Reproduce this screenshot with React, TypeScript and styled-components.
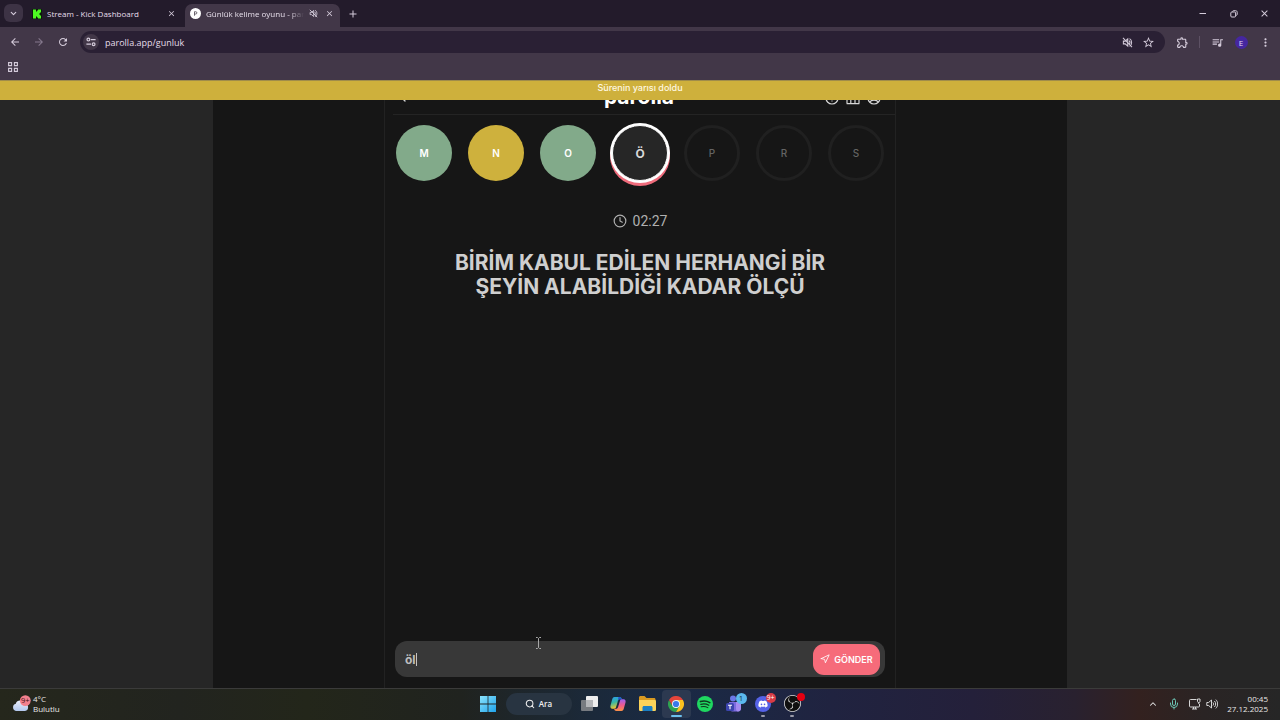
import React from "react";
import styled, { createGlobalStyle } from "styled-components";
import { ChevronDown, ChevronLeft, ChevronUp, Clock, Mic, Navigation, Search } from "lucide-react";
import {
  MdArrowBack,
  MdArrowForward,
  MdClose,
  MdAdd,
  MdMoreVert,
  MdOutlineExtension,
  MdQueueMusic,
  MdRefresh,
  MdStarBorder,
} from "react-icons/md";
import { FaDiscord } from "react-icons/fa";
import { SiObsstudio } from "react-icons/si";

const Global = createGlobalStyle`
  *, *::before, *::after { box-sizing: border-box; }
  body { margin: 0; background: #161616; }
  button, input { font: inherit; color: inherit; border: 0; background: none; padding: 0; margin: 0; }
  svg { display: block; flex: none; }
`;

const uiFont = `"Open Sans", "Noto Sans", sans-serif`;
const gameFont = `Inter, Roboto, sans-serif`;

const Screen = styled.div`
  min-height: 100vh;
  display: flex;
  flex-direction: column;
  font-family: ${uiFont};
  font-size: 9px;
  color: #dcd3e2;
  overflow: hidden;
`;

/* Browser chrome */

const TabStrip = styled.header`
  height: 27px;
  display: flex;
  align-items: flex-start;
  padding: 4px 0 0 4px;
  background: #231b2b;
`;

const IconButton = styled.button<{ $w?: number; $h?: number; $bg?: string; $color?: string; $round?: number }>`
  width: ${(p) => p.$w ?? 24}px;
  height: ${(p) => p.$h ?? 20}px;
  display: flex;
  flex: none;
  align-items: center;
  justify-content: center;
  border-radius: ${(p) => p.$round ?? 0}px;
  background: ${(p) => p.$bg ?? "transparent"};
  color: ${(p) => p.$color ?? "#d5ccdb"};
`;

const Tab = styled.div<{ $active?: boolean }>`
  position: relative;
  width: 155px;
  height: 23px;
  display: flex;
  align-items: center;
  gap: 5px;
  padding: 0 5px 4px 5px;
  margin-left: ${(p) => (p.$active ? 3 : 4)}px;
  border-radius: 7px 7px 0 0;
  background: ${(p) => (p.$active ? "#423748" : "transparent")};
`;

const TabTitle = styled.span<{ $fade?: boolean }>`
  flex: 1;
  min-width: 0;
  overflow: hidden;
  white-space: nowrap;
  font-size: 8px;
  line-height: 14px;
  color: #e6deea;
  ${(p) => p.$fade && "mask-image: linear-gradient(90deg, #000 85%, transparent);"}
`;

const WindowControls = styled.div`
  display: flex;
  margin-left: auto;
`;

const Toolbar = styled.nav`
  height: 30px;
  display: flex;
  align-items: center;
  padding: 0 3px;
  background: #423748;
`;

const Omnibox = styled.div`
  flex: 1;
  height: 22px;
  display: flex;
  align-items: center;
  margin: 0 5px;
  padding: 0 6px 0 3px;
  border-radius: 11px;
  background: #2a2034;
`;

const Address = styled.input`
  flex: 1;
  min-width: 0;
  height: 16px;
  margin-left: 6px;
  color: #e4dce9;
  outline: none;
`;

const Divider = styled.span`
  width: 1px;
  height: 12px;
  margin: 0 5px;
  background: #5d5164;
`;

const Avatar = styled.span`
  width: 13px;
  height: 13px;
  border-radius: 50%;
  background: #4527a0;
  color: #e2dcf5;
  font-size: 8px;
  line-height: 13px;
  text-align: center;
`;

const Bookmarks = styled.div`
  height: 23px;
  display: flex;
  align-items: center;
  padding: 0 0 4px 1px;
  background: #423748;
`;

/* Game page */

const Page = styled.main`
  position: relative;
  flex: 1;
  display: flex;
  padding: 0 16.65%;
  background: #262626;
  font-family: ${gameFont};
`;

const Banner = styled.div`
  position: absolute;
  inset: 0 0 auto 0;
  z-index: 2;
  height: 20px;
  padding-bottom: 4px;
  border-top: 1px solid #a08c4a;
  background: #ceb03c;
  color: #fff8e0;
  font-size: 9px;
  font-weight: 500;
  line-height: 14px;
  text-align: center;
`;

const Stage = styled.div`
  flex: 1;
  display: flex;
  justify-content: center;
  background: #161616;
`;

const Game = styled.section`
  position: relative;
  width: 100%;
  max-width: 512px;
  display: flex;
  flex-direction: column;
  border: solid #222222;
  border-width: 0 1px;
`;

const GameHeader = styled.div`
  height: 35px;
  display: grid;
  grid-template-columns: 1fr auto 1fr;
  align-items: end;
  margin: 0 0 0 8px;
  border-bottom: 1px solid #242424;
  color: #d6d6d6;
`;

const BackLink = styled.a`
  width: 20px;
  padding: 0 0 9px 2px;
  color: inherit;
`;

const Brand = styled.h1`
  margin: 0 10px 5px 0;
  color: #fff;
  font-size: 21px;
  font-weight: 700;
  line-height: 24px;
`;

const HeaderActions = styled.div`
  display: flex;
  justify-content: flex-end;
  gap: 7px;
  padding: 0 14px 9px 0;
`;

const Letters = styled.ol`
  display: flex;
  justify-content: center;
  gap: 16px;
  margin: 10px 0 0;
  padding: 0;
  list-style: none;
`;

type LetterState = "correct" | "passed" | "current" | "idle";

const letterLook: Record<LetterState, string> = {
  correct: "background: #82aa8a; color: #fff;",
  passed: "background: #ceb13d; color: #fff;",
  current:
    "background: #262626; color: #d8d8d8; border: 1px solid #fff; box-shadow: 0 0 0 2px #fff, 0 3px 0 2px #ef6c7c; font-weight: 700; font-size: 12px;",
  idle: "border: 3px solid #202020; color: #646464; font-weight: 500;",
};

const Letter = styled.li<{ $state: LetterState }>`
  width: 56px;
  height: 56px;
  display: flex;
  align-items: center;
  justify-content: center;
  border-radius: 50%;
  font-size: 10px;
  font-weight: 600;
  ${(p) => letterLook[p.$state]}
`;

const Timer = styled.div`
  display: flex;
  align-items: center;
  justify-content: center;
  gap: 6px;
  margin-top: 30px;
  color: #b0b0b0;
  font-family: Roboto, sans-serif;
  font-size: 14px;
  line-height: 20px;
`;

const Question = styled.h2`
  max-width: 400px;
  margin: 20px auto 0;
  color: #cfcfcf;
  font-size: 21px;
  font-weight: 700;
  line-height: 24px;
  text-align: center;
`;

const AnswerBar = styled.form`
  position: relative;
  height: 36px;
  display: flex;
  align-items: center;
  margin: auto 10px 11px;
  padding: 0 5px 0 10px;
  border-radius: 12px;
  background: #383838;
`;

const Answer = styled.input`
  flex: 1;
  min-width: 0;
  height: 24px;
  color: #bdbdbd;
  font-size: 12px;
  font-weight: 700;
  outline: none;
`;

const Caret = styled.span`
  position: absolute;
  left: 21px;
  top: 12px;
  width: 1px;
  height: 13px;
  background: #c4c4c4;
`;

const SendButton = styled.button`
  width: 67px;
  height: 31px;
  display: flex;
  align-items: center;
  justify-content: center;
  gap: 4px;
  border-radius: 11px;
  background: #f66b7a;
  color: #fff;
  font-size: 9px;
  font-weight: 600;
`;

const Pointer = styled.svg`
  position: absolute;
  left: 150px;
  bottom: 39px;
`;

/* Taskbar */

const Taskbar = styled.footer`
  height: 32px;
  display: grid;
  grid-template-columns: 1fr auto 1fr;
  align-items: center;
  padding-bottom: 2px;
  border-top: 1px solid #3b3b3a;
  background: linear-gradient(90deg, #25271c 0%, #22241f 14%, #23261a 24%, #20231f 36%, #1b2939 46%, #1a2a45 53%, #202340 65%, #24203a 76%, #29212f 84%, #33211f 89%, #2a2424 94%, #262626 100%);
  color: #e8e8e8;
`;

const Weather = styled.button`
  display: flex;
  align-items: center;
  gap: 2px;
  padding-left: 12px;
  font-size: 8px;
  line-height: 10px;
  text-align: left;
  justify-self: start;
`;

const Dock = styled.div`
  display: flex;
  align-items: center;
`;

const DockItem = styled.button<{ $active?: boolean; $running?: boolean }>`
  position: relative;
  width: 29px;
  height: 28px;
  display: flex;
  align-items: center;
  justify-content: center;
  border-radius: 4px;
  background: ${(p) => (p.$active ? "#2c3950" : "transparent")};
  &::after {
    content: "";
    position: absolute;
    bottom: 1px;
    width: ${(p) => (p.$active ? 11 : 4)}px;
    height: 2px;
    border-radius: 1px;
    background: ${(p) => (p.$active ? "#6cc1ee" : p.$running ? "#9a9aa8" : "transparent")};
  }
`;

const SearchPill = styled.button`
  width: 66px;
  height: 22px;
  display: flex;
  align-items: center;
  justify-content: center;
  gap: 4px;
  margin: 0 3px;
  border-radius: 11px;
  background: #283441;
  color: #f0f0f0;
  font-size: 8px;
  font-weight: 600;
`;

const Badge = styled.span<{ $bg: string; $color?: string; $size?: number }>`
  position: absolute;
  top: 3px;
  right: 2px;
  width: ${(p) => p.$size ?? 10}px;
  height: ${(p) => p.$size ?? 10}px;
  border-radius: 50%;
  background: ${(p) => p.$bg};
  color: ${(p) => p.$color ?? "#fff"};
  font-size: 7px;
  line-height: ${(p) => p.$size ?? 10}px;
  text-align: center;
`;

const Tray = styled.div`
  display: flex;
  align-items: center;
  justify-content: flex-end;
  padding-right: 12px;
`;

const ClockText = styled.time`
  margin-left: 8px;
  font-size: 8px;
  line-height: 10px;
  text-align: right;
`;

const Muted = ({ size }: { size: number }) => (
  <svg width={size} height={size} viewBox="0 0 16 16" fill="none" stroke="currentColor" strokeWidth="1.5">
    <path d="M2 6h2.6L8.400 2.600v10.800L4.600 10H2z" />
    <path d="M10.400 5.400c1.400 1.400 1.400 3.800 0 5.200M11 2.400c4 2 4 9.200 0 11.200" />
    <path d="M1.400 1.400l13.200 13.200" />
  </svg>
);

const KickLogo = () => (
  <svg width="10" height="10" viewBox="0 0 10 10">
    <rect width="10" height="10" fill="#0d1a0c" />
    <path d="M1 .5h3v2h1v-1h1v-1h3v3H8v1H7v1h1v1h1v3H6v-1H5v-1H4v2H1z" fill="#4dfb22" />
  </svg>
);

const ParollaIcon = () => (
  <svg width="11" height="11" viewBox="0 0 11 11">
    <circle cx="5.500" cy="5.500" r="5.500" fill="#fff" />
    <path d="M4.500 7.700V3.700h1.200a1.100 1.100 0 010 2.300H4.600" fill="none" stroke="#5c5560" strokeWidth=".9" />
  </svg>
);

const SiteSettings = () => (
  <svg width="10" height="10" viewBox="0 0 10 10" fill="none" stroke="currentColor" strokeWidth="1.200">
    <path d="M4.800 2.600H9.600M.4 7.200h4.600" />
    <circle cx="2.400" cy="2.600" r="1.400" />
    <circle cx="7.600" cy="7.200" r="1.400" />
  </svg>
);

const AppsGrid = () => (
  <svg width="10" height="10" viewBox="0 0 10 10" fill="none" stroke="currentColor" strokeWidth="1.100">
    <path d="M.6.6h3v3h-3zM6.400.6h3v3h-3zM.6 6.400h3v3h-3zM6.400 6.400h3v3h-3z" />
  </svg>
);

const MinimizeIcon = () => (
  <svg width="8" height="8" viewBox="0 0 8 8" stroke="currentColor"><path d="M.5 3.500h6.500" /></svg>
);

const RestoreIcon = () => (
  <svg width="8" height="8" viewBox="0 0 8 8" fill="none" stroke="currentColor">
    <rect x=".8" y="2" width="4.800" height="5" rx="1" />
    <path d="M2.400 1.600c.3-.7.6-.9 1.300-.9h1.900c1 0 1.600.6 1.600 1.600v1.900c0 .7-.3 1.100-.9 1.300" />
  </svg>
);

const HelpIcon = () => (
  <svg width="14" height="14" viewBox="0 0 14 14" fill="none" stroke="currentColor" strokeWidth="1.200">
    <circle cx="7" cy="7" r="6" />
    <path d="M5.400 5.400c.3-2 3.500-1.700 3.200.2C8.400 6.600 7 6.700 7 8M7 9.400v1" />
  </svg>
);

const ChartIcon = () => (
  <svg width="14" height="14" viewBox="0 0 14 14" fill="none" stroke="currentColor" strokeWidth="1.200">
    <path d="M1 12.600V6.500h3.800v6.100M4.800 12.600V1.500h4.200v11.100M9 12.600V4.500h4v8.100M.6 12.600h12.800" />
  </svg>
);

const UserIcon = () => (
  <svg width="14" height="14" viewBox="0 0 14 14" fill="none" stroke="currentColor" strokeWidth="1.200">
    <circle cx="7" cy="7" r="6" />
    <circle cx="7" cy="5.500" r="2" />
    <path d="M2.800 11c1.400-2.400 7-2.400 8.400 0" />
  </svg>
);

const WeatherIcon = () => (
  <svg width="19" height="18" viewBox="0 0 19 18">
    <defs>
      <linearGradient id="cloud" x2="0" y2="1"><stop stopColor="#e9eefb" /><stop offset="1" stopColor="#b3c8ee" /></linearGradient>
    </defs>
    <path d="M4 16a3.700 3.700 0 01-.2-7.200C4.500 5 10.500 4.200 12 8.200c5-.4 5.600 7.300 1 7.800z" fill="url(#cloud)" />
    <circle cx="13.300" cy="5.600" r="5.400" fill="#f2808d" />
    <text x="13.300" y="8.300" fontSize="7.500" textAnchor="middle" fill="#3d1118">9+</text>
  </svg>
);

const WindowsLogo = () => (
  <svg width="16" height="16" viewBox="0 0 16 16">
    <defs>
      <linearGradient id="win" x2="1" y2="1"><stop stopColor="#8be3fb" /><stop offset="1" stopColor="#1fa3ec" /></linearGradient>
    </defs>
    <path d="M0 0h7.600v7.600H0zM8.400 0H16v7.600H8.400zM0 8.400h7.600V16H0zM8.400 8.400H16V16H8.400z" fill="url(#win)" />
  </svg>
);

const TaskViewIcon = () => (
  <svg width="17" height="15" viewBox="0 0 17 15">
    <rect x="5" y="0" width="12" height="11" rx="1" fill="#eeeeee" />
    <rect x="0" y="4" width="12" height="11" rx="1" fill="#777b80" />
    <rect x="5" y="4" width="7" height="7" fill="#b4b6b9" />
  </svg>
);

const CopilotIcon = () => (
  <svg width="16" height="16" viewBox="0 0 16 16">
    <defs>
      <linearGradient id="cpA" x2="0.300" y2="1"><stop stopColor="#2a9df2" /><stop offset=".5" stopColor="#36b7a4" /><stop offset="1" stopColor="#f3c62c" /></linearGradient>
      <linearGradient id="cpB" x2="0" y2="1"><stop stopColor="#9b62f0" /><stop offset=".5" stopColor="#ef5a8e" /><stop offset="1" stopColor="#fb9146" /></linearGradient>
    </defs>
    <path d="M4.600 1h5c1.400 0 1.900 1 2.300 2.300H9.800c-1 0-1.500.6-1.800 1.500L6 11.300c-.3 1-.9 1.400-1.800 1.400H2.400C.7 12.700 0 11.300.5 9.500L2.300 3C2.700 1.700 3.300 1 4.600 1z" fill="url(#cpA)" />
    <path d="M11.400 15h-5c-1.400 0-1.900-1-2.300-2.300h2.100c1 0 1.500-.6 1.800-1.500l2-6.500c.3-1 .9-1.400 1.800-1.400h1.800c1.700 0 2.400 1.400 1.900 3.200L13.700 13c-.4 1.300-1 2-2.300 2z" fill="url(#cpB)" />
    <path d="M9.600 1c1.400 0 1.900 1 2.300 2.300H9.800c-1 0-1.500.6-1.800 1.500L7.300 7 8.500 1z" fill="#2353cf" />
  </svg>
);

const FolderIcon = () => (
  <svg width="17" height="15" viewBox="0 0 17 15">
    <path d="M0 1.500C0 .6.600 0 1.500 0h4L7.500 2H15c1 0 1.500.6 1.500 1.500V6H0z" fill="#d99a21" />
    <path d="M0 4h15.500c.9 0 1.500.5 1.500 1.400v8c0 .9-.6 1.600-1.500 1.600h-14C.6 15 0 14.300 0 13.400z" fill="#fbd35a" />
    <path d="M3.500 15v-3.500c0-.9.6-1.500 1.500-1.500h7c.9 0 1.500.6 1.500 1.500V15z" fill="#1a7fc4" />
  </svg>
);

const ChromeIcon = () => (
  <svg width="16" height="16" viewBox="0 0 16 16">
    <path d="M8 8l3.460 2L8 16A8 8 0 011.070 4L4.540 10z" fill="#2ea350" />
    <path d="M8 4h6.930A8 8 0 018 16l3.460-6z" fill="#fbc21f" />
    <path d="M1.070 4A8 8 0 0114.930 4H8a4 4 0 00-3.460 6z" fill="#e5453a" />
    <circle cx="8" cy="8" r="4" fill="#f3f5f8" />
    <circle cx="8" cy="8" r="3.100" fill="#3a79ea" />
  </svg>
);

const SpotifyIcon = () => (
  <svg width="16" height="16" viewBox="0 0 16 16" fill="none" stroke="#10351f" strokeLinecap="round">
    <circle cx="8" cy="8" r="8" fill="#1fd760" stroke="none" />
    <path d="M3.400 5.600c3.200-.9 6.600-.6 9.400 1" strokeWidth="1.600" />
    <path d="M3.800 8.300c2.700-.8 5.600-.5 8 .9" strokeWidth="1.300" />
    <path d="M4.200 10.800c2.300-.6 4.600-.4 6.600.8" strokeWidth="1.100" />
  </svg>
);

const TeamsIcon = () => (
  <svg width="16" height="17" viewBox="0 0 16 17">
    <circle cx="7" cy="3.500" r="3" fill="#6b78e8" />
    <path d="M3 7h12v6a3.500 3.500 0 01-3.500 3.500H6A3.500 3.500 0 013 13z" fill="#7c6ae0" />
    <path d="M10 7h5v6c0 2-1.200 3.500-3 3.500-1.500 0-2-1.500-2-3z" fill="#a58cf0" />
    <rect x="0" y="8" width="8" height="8" rx="1.500" fill="#3c45ae" />
    <path d="M2 10.200h4M4 10.200v4" stroke="#fff" strokeWidth="1.100" />
  </svg>
);

const DiscordIcon = () => (
  <svg width="16" height="16" viewBox="0 0 16 16">
    <circle cx="8" cy="8" r="8" fill="#5562e6" />
    <FaDiscord x="3" y="3" size={10} color="#fff" />
  </svg>
);

const ObsIcon = () => (
  <svg width="17" height="17" viewBox="0 0 17 17">
    <circle cx="8.500" cy="8.500" r="8" fill="#101010" />
    <SiObsstudio size={17} color="#dcdcdc" />
  </svg>
);

const NetworkIcon = () => (
  <svg width="12" height="12" viewBox="0 0 12 12" fill="none" stroke="currentColor">
    <path d="M7.500 1.500H1.500a1 1 0 00-1 1v5.500a1 1 0 001 1h8a1 1 0 001-1V6M3 11h5M4.500 9v2M6.500 9v2" />
    <path d="M8.500 1v2.500c0 1.400 2.500 1.400 2.500 0V1zM9.800 4.500V6" />
  </svg>
);

const SpeakerIcon = () => (
  <svg width="12" height="12" viewBox="0 0 12 12" fill="none" stroke="currentColor" strokeLinejoin="round">
    <path d="M.8 4.500h1.800L5.500 2v8L2.600 7.500H.8zM7 4.500c.8.800.8 2.200 0 3M8.400 3c1.700 1.600 1.700 4.400 0 6M9.800 1.600c2.500 2.400 2.500 6.400 0 8.800" />
  </svg>
);

const letters: { char: string; state: LetterState }[] = [
  { char: "M", state: "correct" },
  { char: "N", state: "passed" },
  { char: "O", state: "correct" },
  { char: "Ö", state: "current" },
  { char: "P", state: "idle" },
  { char: "R", state: "idle" },
  { char: "S", state: "idle" },
];

export default function App() {
  return (
    <Screen lang="tr">
      <Global />
      <TabStrip>
        <IconButton $w={19} $h={18} $round={6} $bg="#3d3345" aria-label="Sekme ara">
          <ChevronDown size={9} strokeWidth={3} />
        </IconButton>
        <Tab>
          <KickLogo />
          <TabTitle>Stream - Kick Dashboard</TabTitle>
          <IconButton $w={12} $h={12} aria-label="Kapat"><MdClose size={9} /></IconButton>
        </Tab>
        <Tab $active>
          <ParollaIcon />
          <TabTitle $fade>Günlük kelime oyunu - parolla</TabTitle>
          <Muted size={9} />
          <IconButton $w={12} $h={12} aria-label="Kapat"><MdClose size={9} /></IconButton>
        </Tab>
        <IconButton $w={26} $h={19} aria-label="Yeni sekme"><MdAdd size={12} /></IconButton>
        <WindowControls>
          <IconButton $w={30} $h={19} aria-label="Simge durumuna küçült"><MinimizeIcon /></IconButton>
          <IconButton $w={31} $h={19} aria-label="Geri yükle"><RestoreIcon /></IconButton>
          <IconButton $w={31} $h={19} aria-label="Pencereyi kapat"><MdClose size={11} /></IconButton>
        </WindowControls>
      </TabStrip>

      <Toolbar>
        <IconButton aria-label="Geri"><MdArrowBack size={12} /></IconButton>
        <IconButton $color="#85798d" aria-label="İleri"><MdArrowForward size={12} /></IconButton>
        <IconButton aria-label="Yenile"><MdRefresh size={12} /></IconButton>
        <Omnibox>
          <IconButton $w={16} $h={16} $round={8} $bg="#423748" aria-label="Site bilgileri"><SiteSettings /></IconButton>
          <Address aria-label="Adres" defaultValue="parolla.app/gunluk" />
          <IconButton $w={22} aria-label="Sesi kapalı"><Muted size={11} /></IconButton>
          <IconButton $w={21} aria-label="Yer işareti"><MdStarBorder size={13} /></IconButton>
        </Omnibox>
        <IconButton aria-label="Uzantılar"><MdOutlineExtension size={13} /></IconButton>
        <Divider />
        <IconButton aria-label="Medya"><MdQueueMusic size={13} /></IconButton>
        <IconButton aria-label="Profil"><Avatar>E</Avatar></IconButton>
        <IconButton aria-label="Menü"><MdMoreVert size={13} /></IconButton>
      </Toolbar>
      <Bookmarks>
        <IconButton aria-label="Uygulamalar"><AppsGrid /></IconButton>
      </Bookmarks>

      <Page>
        <Banner role="status">Sürenin yarısı doldu</Banner>
        <Stage>
          <Game>
            <GameHeader>
              <BackLink href="#" aria-label="Geri dön"><ChevronLeft size={16} /></BackLink>
              <Brand>parolla</Brand>
              <HeaderActions>
                <HelpIcon />
                <ChartIcon />
                <UserIcon />
              </HeaderActions>
            </GameHeader>
            <Letters>
              {letters.map((l) => (
                <Letter key={l.char} $state={l.state}>{l.char}</Letter>
              ))}
            </Letters>
            <Timer><Clock size={14} />02:27</Timer>
            <Question>BİRİM KABUL EDİLEN HERHANGİ BİR ŞEYİN ALABİLDİĞİ KADAR ÖLÇÜ</Question>
            <AnswerBar onSubmit={(e: React.FormEvent) => e.preventDefault()}>
              <Answer aria-label="Cevap" defaultValue="öl" />
              <Caret />
              <SendButton type="submit"><Navigation size={10} />GÖNDER</SendButton>
            </AnswerBar>
            <Pointer width="7" height="12" viewBox="0 0 7 12" fill="none" stroke="#a8a8a8">
              <path d="M1 .5h1.500l1 1 1-1H6M3.500 1.500v9M1 11.500h1.500l1-1 1 1H6" />
            </Pointer>
          </Game>
        </Stage>
      </Page>

      <Taskbar>
        <Weather>
          <WeatherIcon />
          <span>4°C<br />Bulutlu</span>
        </Weather>
        <Dock>
          <DockItem aria-label="Başlat"><WindowsLogo /></DockItem>
          <SearchPill><Search size={10} strokeWidth={2.5} />Ara</SearchPill>
          <DockItem aria-label="Görev görünümü"><TaskViewIcon /></DockItem>
          <DockItem aria-label="Copilot"><CopilotIcon /></DockItem>
          <DockItem aria-label="Dosya Gezgini"><FolderIcon /></DockItem>
          <DockItem $active aria-label="Chrome"><ChromeIcon /></DockItem>
          <DockItem aria-label="Spotify"><SpotifyIcon /></DockItem>
          <DockItem aria-label="Teams"><TeamsIcon /><Badge $bg="#5bb9ee" $color="#10222f" $size={11}>1</Badge></DockItem>
          <DockItem $running aria-label="Discord"><DiscordIcon /><Badge $bg="#d83b46">9+</Badge></DockItem>
          <DockItem $running aria-label="OBS"><ObsIcon /><Badge $bg="#e60012" $size={8} /></DockItem>
        </Dock>
        <Tray>
          <IconButton $w={20} $color="#e4e4e4" aria-label="Gizli simgeler"><ChevronUp size={10} strokeWidth={2.5} /></IconButton>
          <IconButton $w={22} $color="#6cc5b4" aria-label="Mikrofon"><Mic size={12} /></IconButton>
          <IconButton $w={20} $color="#d6d6d6" aria-label="Ağ"><NetworkIcon /></IconButton>
          <IconButton $w={14} $color="#d6d6d6" aria-label="Ses"><SpeakerIcon /></IconButton>
          <ClockText>00:45<br />27.12.2025</ClockText>
        </Tray>
      </Taskbar>
    </Screen>
  );
}
